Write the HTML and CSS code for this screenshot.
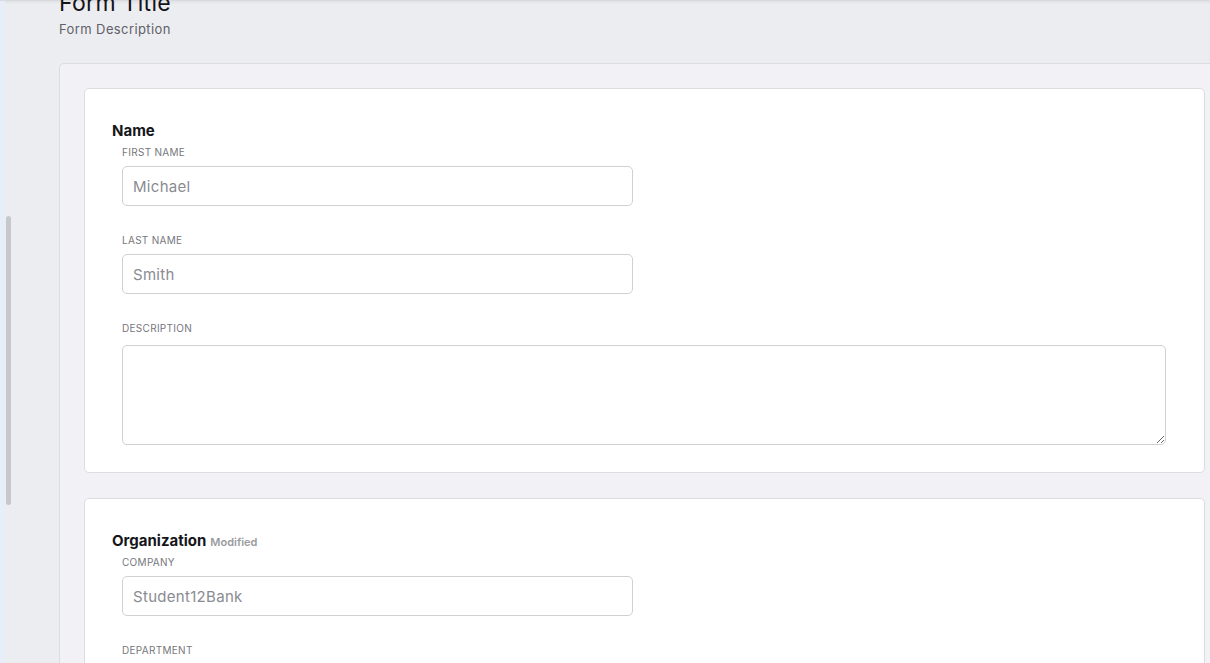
FILE: index.html
```html
<!DOCTYPE html>
<html>
<head>
<meta charset="utf-8">
<link rel="stylesheet" href="styles.css">
</head>
<body>
<div class="app">
  <div class="rail"></div>
  <div class="track"><div class="thumb"></div></div>
  <main class="main">
    <header class="head">
      <h1 class="title">Form Title</h1>
      <p class="desc">Form Description</p>
    </header>
    <section class="panel">
      <div class="card">
        <h2 class="group">Name</h2>
        <div class="fields">
          <label class="field">
            <span class="label">First name</span>
            <input class="input" type="text" placeholder="Michael">
          </label>
          <label class="field">
            <span class="label">Last name</span>
            <input class="input" type="text" placeholder="Smith">
          </label>
          <label class="field">
            <span class="label">Description</span>
            <textarea class="area"></textarea>
          </label>
        </div>
      </div>
      <div class="card">
        <h2 class="group">Organization <span class="mod">Modified</span></h2>
        <div class="fields">
          <label class="field">
            <span class="label">Company</span>
            <input class="input" type="text" placeholder="Student12Bank">
          </label>
          <label class="field">
            <span class="label">Department</span>
            <input class="input" type="text" placeholder="">
          </label>
        </div>
      </div>
    </section>
  </main>
</div>
</body>
</html>
```
FILE: styles.css
```css
* { box-sizing: border-box; }
html, body { margin: 0; height: 100%; overflow: hidden; }
body {
  background: #ecedf1;
  font-family: "Inter", "Roboto", sans-serif;
  color: #1d1d22;
}
.app {
  display: flex;
  height: 663px;
  border-top: 1px solid #d9dade;
  box-shadow: inset 0 2px 2px rgba(0,0,0,0.04);
}
.rail {
  width: 5px;
  flex: none;
  background: #e7eefa;
}
.track {
  width: 8px;
  flex: none;
  padding-top: 215px;
  margin-left: 1px;
}
.thumb {
  width: 5px;
  height: 289px;
  background: #c6c8cc;
  border-radius: 3px;
}
.main {
  flex: 1;
  padding-left: 45px;
  min-width: 0;
}
.head {
  margin-top: -12px;
  height: 74px;
}
.title {
  margin: 0;
  font-size: 23px;
  font-weight: 400;
  line-height: 28px;
  letter-spacing: 0.3px;
  color: #141418;
}
.desc {
  margin: 3px 0 0;
  font-size: 13px;
  line-height: 18px;
  letter-spacing: 0.4px;
  color: #5f6068;
}
.panel {
  background: #f2f2f6;
  border: 1px solid #dcdde1;
  border-right: none;
  border-radius: 5px 0 0 0;
  padding: 24px 5px 0 24px;
  height: 700px;
}
.card {
  background: #fff;
  border: 1px solid #dcdde1;
  border-radius: 5px;
  padding: 31px 38px 27px 27px;
  margin-bottom: 25px;
}
.group {
  display: flex;
  align-items: baseline;
  gap: 4px;
  height: 22px;
  margin: 0 0 3px;
  font-size: 15px;
  font-weight: 700;
  line-height: 22px;
  color: #16161a;
}
.mod {
  font-size: 11px;
  line-height: 14px;
  font-weight: 600;
  color: #9a9ba0;
}
.fields {
  padding-left: 10px;
  display: flex;
  flex-direction: column;
  gap: 27px;
}
.field {
  display: flex;
  flex-direction: column;
  align-items: flex-start;
}
.label {
  font-size: 10px;
  line-height: 14px;
  letter-spacing: 0.3px;
  text-transform: uppercase;
  color: #76777d;
  margin-bottom: 7px;
}
.input {
  width: 511px;
  height: 40px;
  border: 1px solid #cfd0d4;
  border-radius: 5px;
  padding: 0 10px;
  font-family: inherit;
  font-size: 15px;
  letter-spacing: 0.3px;
  color: #222;
  background: #fff;
}
.input::placeholder { color: #8a8b91; }
.area {
  width: 100%;
  height: 100px;
  border: 1px solid #cfd0d4;
  border-radius: 5px;
  background: #fff;
  font-family: inherit;
  margin-top: 3px;
}
```
